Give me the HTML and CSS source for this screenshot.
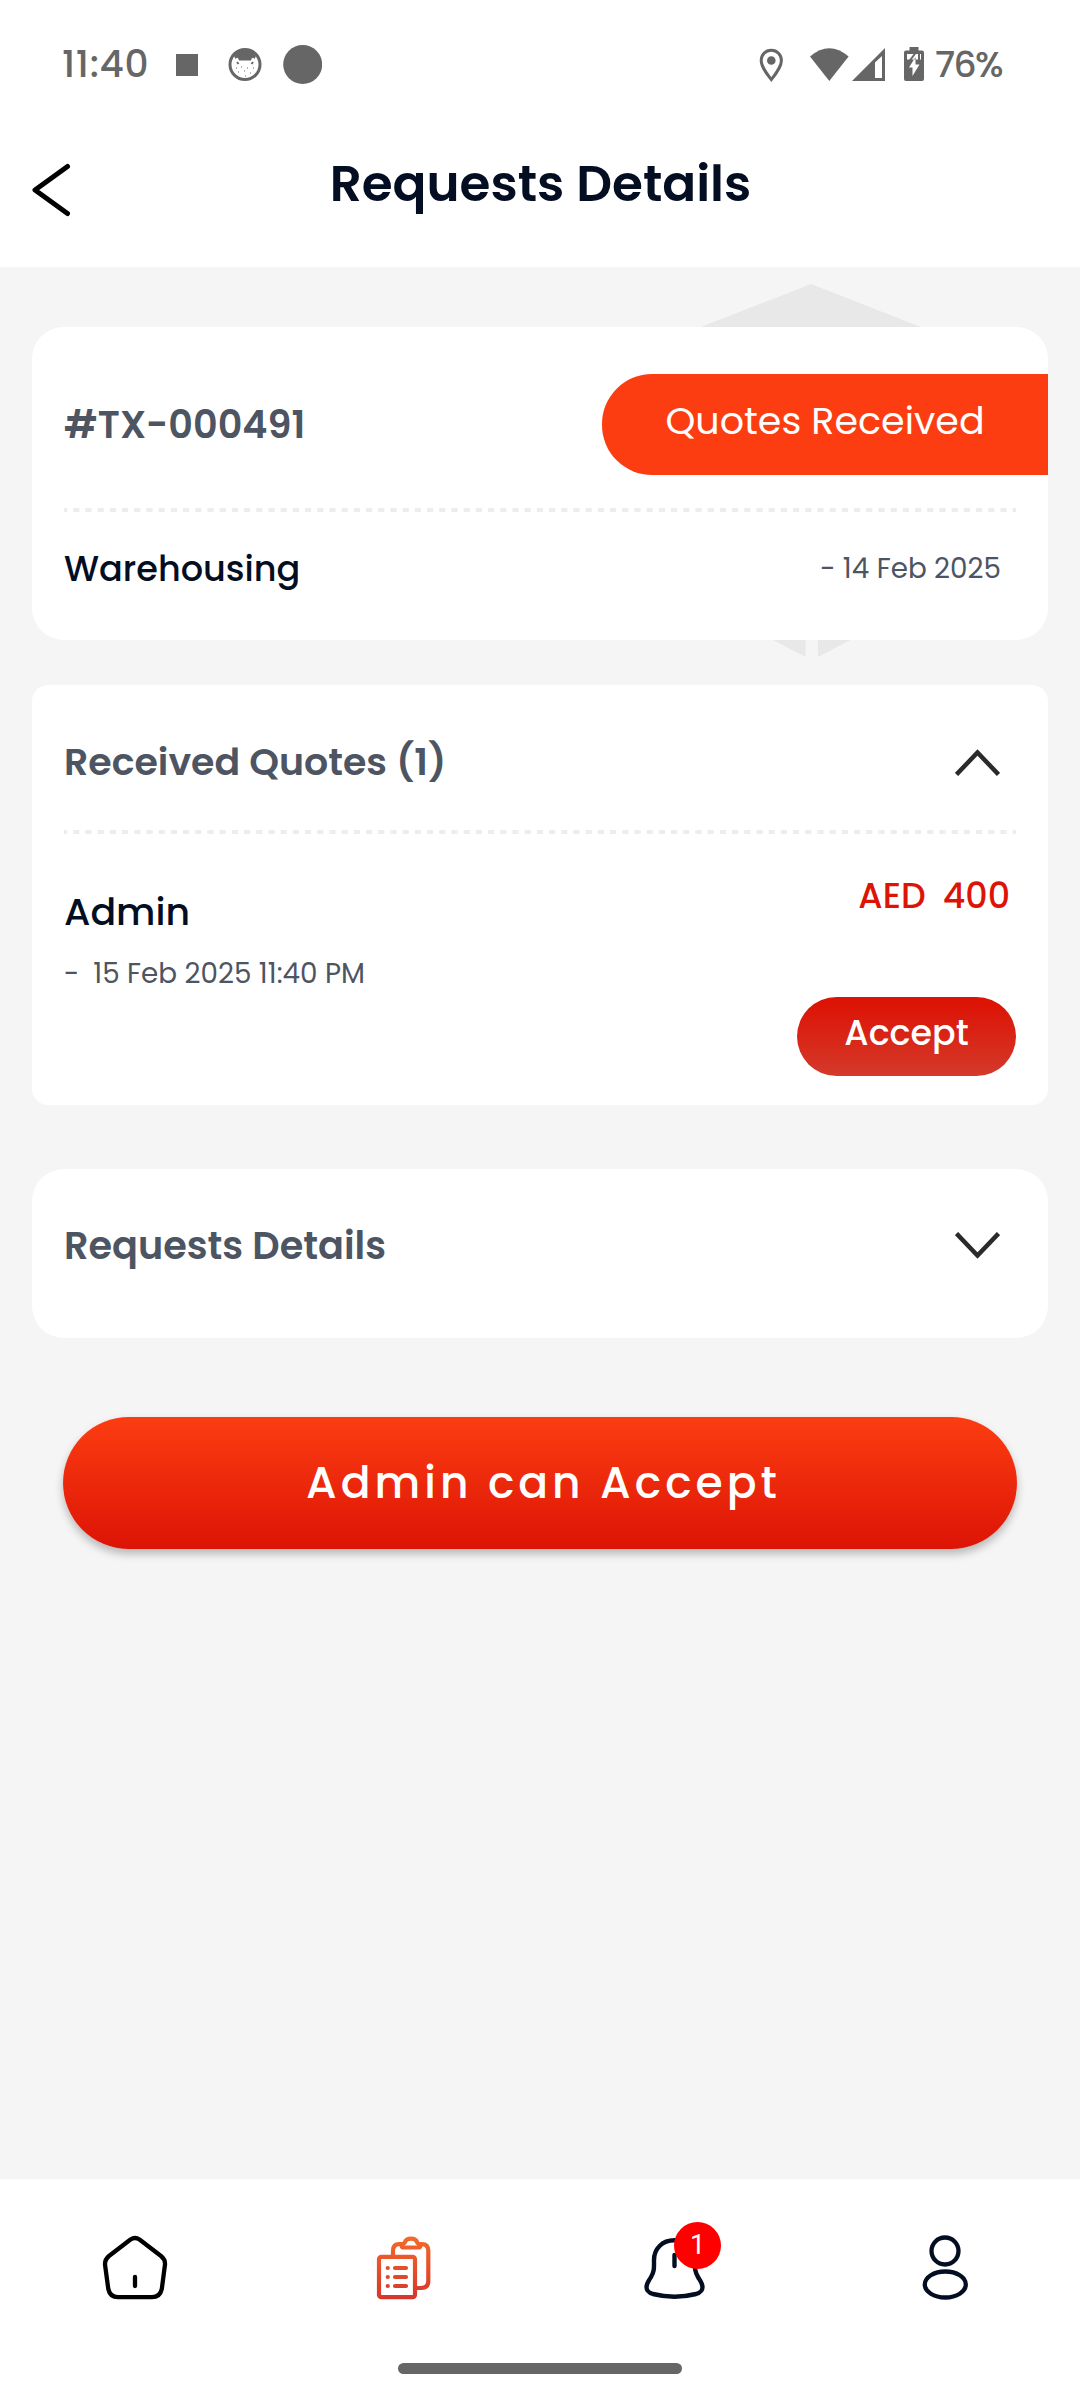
FILE: index.html
```html
<!DOCTYPE html>
<html lang="en">
<head>
<meta charset="utf-8">
<title>Requests Details</title>
<link rel="stylesheet" href="styles.css">
</head>
<body>
<div class="screen">
  <div class="status">
    <div class="status-left">
      <span class="clock">11:40</span>
      <svg width="146" height="40" viewBox="176 44 146 40" fill="#666">
        <rect x="176" y="54" width="22" height="22"/>
        <circle cx="245" cy="64.500" r="15" fill="#fff" stroke="#666" stroke-width="3"/>
        <path d="M234 56Q239 50 245 50T256 56L254.500 59Q252 56 251 60.500H239Q238 56 235.500 59Z"/>
        <path d="M237 62l1.500 2M253 62l-1.500 2" stroke="#666" stroke-width="2"/>
        <path d="M236 68h1M241 67h1M247 68h1M253 68h1M238 72h1M244 71h1M250 73h1M245 76h1" stroke="#666" stroke-width="1.200"/>
        <circle cx="302.700" cy="64.500" r="19.500"/>
      </svg>
    </div>
    <div class="status-right">
      <svg width="166" height="36" viewBox="759 45 166 36" fill="#666">
        <path d="M771.300 49.200C765.500 49.200 761.200 53.700 761.200 59.500C761.200 66.500 771.300 78.600 771.300 78.600S781.400 66.500 781.400 59.500C781.400 53.700 777.100 49.200 771.300 49.200Z" fill="none" stroke="#666" stroke-width="3"/>
        <circle cx="771.300" cy="59.500" r="4.300"/>
        <path d="M810 55.500Q829.300 39 848.600 55.500L829.300 80Z"/>
        <path d="M852 80L885 47V80ZM875 61.500V77H882V55Z" fill-rule="evenodd"/>
        <path d="M909.500 46H918.500V49.500H922Q924 49.500 924 51.500V78Q924 80 922 80H906Q904 80 904 78V51.500Q904 49.500 906 49.500H909.500Z"/>
        <path d="M907 53H921V58.500H907ZM915.500 56L909 66.500H912.500V75L919.500 63.500H915.500Z" fill="#fff"/>
        <path d="M909.500 60L915.500 52M919 52V60" stroke="#666" stroke-width="2"/>
      </svg>
      <span class="battery">76%</span>
    </div>
  </div>

  <header class="header">
    <svg class="back" width="40" height="54" viewBox="0 0 40 54" fill="none" stroke="#000" stroke-width="5" stroke-linecap="round" stroke-linejoin="round"><path d="M36.500 3.500L4 27L36.500 50.500"/></svg>
    <h1 class="title">Requests Details</h1>
  </header>

  <main class="content">
    <svg class="watermark" width="330" height="374" viewBox="646 284 330 374" fill="#e8e8e8">
      <path d="M811 284L976 348.500V574L818 657V560H805.600V657L646 574V348.500Z"/>
    </svg>

    <section class="card summary">
      <div class="summary-top">
        <span class="strong">#TX-000491</span>
        <span class="tag">Quotes Received</span>
      </div>
      <svg class="divider" width="952" height="5"><path d="M-3 3H952"/></svg>
      <div class="summary-bottom">
        <span class="service">Warehousing</span>
        <span class="small">- 14 Feb 2025</span>
      </div>
    </section>

    <section class="card quotes">
      <div class="quotes-head">
        <span class="strong received">Received Quotes (1)</span>
        <svg class="chevron" width="45" height="27" viewBox="0 0 45 27"><path d="M1.500 25.500L22.500 3.500L43.500 25.500"/></svg>
      </div>
      <svg class="divider" width="952" height="5"><path d="M-3 3H952"/></svg>
      <div class="quote">
        <div class="quote-info">
          <span class="name">Admin</span>
          <span class="small when"><span>-</span><span>15 Feb 2025 11:40 PM</span></span>
        </div>
        <div class="quote-side">
          <span class="price"><span>AED</span><span>400</span></span>
          <button class="accept">Accept</button>
        </div>
      </div>
    </section>

    <section class="card details">
      <span class="strong">Requests Details</span>
      <svg class="chevron" width="45" height="27" viewBox="0 0 45 27"><path d="M1.500 1.500L22.500 23.500L43.500 1.500"/></svg>
    </section>

    <button class="primary">Admin can Accept</button>
  </main>

  <nav class="nav">
    <div class="tabs">
      <a class="tab"><svg width="66" height="66" viewBox="102 2235 66 66" fill="none" stroke="#000" stroke-width="4.300" stroke-linecap="round" stroke-linejoin="round"><path d="M130.500 2239.500Q135 2236.500 139.500 2239.500L161 2256Q166 2260 164.800 2266L161.800 2289Q160 2297.200 152 2297.200H118Q110 2297.200 108.300 2289L105.200 2266Q104.200 2260 109 2256ZM135 2277V2286"/></svg></a>
      <a class="tab"><svg width="58" height="66" viewBox="376 2235 58 66" fill="none" stroke="url(#clip)" stroke-width="4.200" stroke-linecap="round" stroke-linejoin="round"><defs><linearGradient id="clip" gradientUnits="userSpaceOnUse" x1="0" y1="2236" x2="0" y2="2300"><stop offset="0" stop-color="#f46a2c"/><stop offset="1" stop-color="#d6352b"/></linearGradient></defs><rect x="379" y="2256.800" width="36" height="40.400" rx="2.500"/><path d="M393 2255V2251Q393 2244.200 399 2244.200H402M419 2244.200H422Q428.300 2244.200 428.300 2251V2281Q428.300 2288 421 2288H417M403 2247.500C401 2247.500 401.500 2244 404.500 2243C406 2238.800 408 2238.700 411 2238.700S416 2238.800 417.500 2243C420.500 2244 421 2247.500 419 2247.500ZM387.700 2268h.1M387.700 2277h.1M387.700 2286h.1M395 2268H406M395 2277H406M395 2286H406"/></svg></a>
      <a class="tab"><svg width="64" height="66" viewBox="643 2235 64 66" fill="none" stroke="#030e22" stroke-width="4.400" stroke-linecap="round"><path d="M674.500 2240.300C662 2240.300 654 2249 654 2260C654 2268 654.500 2271 651 2277C648 2282 646.500 2283.500 646.500 2287C646.500 2291 648.500 2292.500 653 2294C667 2297.500 682 2297.500 696 2294C700.500 2292.500 702.500 2291 702.500 2287C702.500 2283.500 701 2282 698 2277C694.500 2271 695 2268 695 2260C695 2249 687 2240.300 674.500 2240.300ZM674.500 2255V2266"/></svg><span class="badge">1</span></a>
      <a class="tab"><svg width="48" height="66" viewBox="921 2235 48 66" fill="none" stroke="#030e22" stroke-width="4.300"><circle cx="945" cy="2251" r="13.500"/><ellipse cx="945.300" cy="2284.500" rx="20.500" ry="13"/></svg></a>
    </div>
    <div class="home-bar"></div>
  </nav>
</div>
</body>
</html>
```
FILE: styles.css
```css
* { box-sizing: border-box; }

body {
  margin: 0;
  background: #f5f5f5;
  color: #030e22;
  font-family: Poppins, Inter, "Open Sans", sans-serif;
  white-space: nowrap;
}

button { border: 0; padding: 0; font-family: inherit; color: #fff; }
svg { display: block; flex: none; }

.screen { display: flex; flex-direction: column; height: 2400px; }

.status {
  display: flex;
  justify-content: space-between;
  align-items: center;
  height: 128px;
  padding: 0 77px 0 62px;
  background: #fff;
  color: #666;
  font-weight: 500;
}
.status-left, .status-right { display: flex; align-items: center; }
.clock { width: 114px; font-size: 37.500px; letter-spacing: 0.7px; }
.status-right { gap: 10px; }
.battery { width: 68px; font-size: 36px; letter-spacing: -1.6px; }

.header {
  display: grid;
  grid-template-columns: 40px 1fr 40px;
  align-items: center;
  height: 139px;
  padding: 0 31px 28px;
  background: #fff;
}
.back { margin-top: 13px; }
.title { margin: 0; padding-left: 1px; text-align: center; font-size: 50px; font-weight: 600; line-height: 60px; }

.content {
  position: relative;
  flex: 1;
  display: flex;
  flex-direction: column;
  padding: 60px 32px 0;
}
.watermark { position: absolute; left: 646px; top: 17px; }

.card { position: relative; background: #fff; border-radius: 32px; }
.strong { color: #4d5563; font-size: 38.200px; font-weight: 600; }
.received { font-size: 37.900px; padding-bottom: 1px; }
.small { color: #4d5563; font-size: 27.800px; }

.summary { height: 313px; padding-top: 47px; }
.summary-top { display: flex; justify-content: space-between; align-items: center; height: 101px; padding-left: 32px; }
.tag {
  display: flex;
  align-items: center;
  justify-content: center;
  width: 446px;
  height: 101px;
  padding-bottom: 9px;
  border-radius: 50px 0 0 50px;
  background: #fc3d11;
  color: #fff;
  font-size: 38px;
}
.divider { margin: 0 32px; fill: none; stroke: #ededed; stroke-width: 4; stroke-dasharray: 6.2 6; }
.summary .divider { margin-top: 32px; }
.summary-bottom { display: flex; justify-content: space-between; align-items: center; height: 114px; padding: 0 47px 0 32px; }
.service { padding-bottom: 2px; font-size: 35.100px; font-weight: 500; }

.quotes { height: 420px; margin-top: 45px; padding-top: 10px; border-radius: 16px; }
.quotes-head { display: flex; justify-content: space-between; align-items: center; height: 134px; padding: 0 48px 0 32px; }
.chevron { fill: none; stroke: #2a2a2a; stroke-width: 4.500; }
.quote { display: flex; justify-content: space-between; padding: 32px 32px 0; }
.quote-info { display: flex; flex-direction: column; padding-top: 16px; }
.name { font-size: 37.900px; font-weight: 500; line-height: 60px; }
.when { display: flex; gap: 14px; line-height: 63px; }
.quote-side { display: flex; flex-direction: column; align-items: flex-end; gap: 71px; }
.price { display: flex; gap: 17px; padding-right: 6px; color: #dc1406; font-size: 34.900px; font-weight: 500; line-height: 60px; }
.accept {
  width: 219px;
  height: 79px;
  padding-bottom: 8px;
  border-radius: 40px;
  background: linear-gradient(#dc1406 10%, #d43a2b);
  font-size: 34.900px;
  font-weight: 500;
}

.details { display: flex; justify-content: space-between; align-items: center; height: 169px; margin-top: 64px; padding: 0 48px 16px 32px; }

.primary {
  height: 132px;
  margin: 79px 31px 0;
  padding: 0 0 2px 7px;
  border-radius: 66px;
  background: linear-gradient(#fc3d11, #dc1406);
  box-shadow: 0 5px 8px rgba(0, 0, 0, 0.25);
  font-size: 44px;
  font-weight: 500;
  letter-spacing: 4px;
}

.nav { height: 221px; background: #fff; }
.tabs { display: grid; grid-template-columns: repeat(4, 1fr); height: 184px; padding-top: 56px; }
.tab { position: relative; display: flex; justify-content: center; align-items: flex-start; }
.badge {
  position: absolute;
  left: 134px;
  top: -13px;
  width: 47px;
  height: 47px;
  border-radius: 50%;
  background: #f00;
  color: #fff;
  font: 27px/47px Roboto, sans-serif;
  text-align: center;
}
.home-bar { width: 284px; height: 11px; margin: 0 auto; border-radius: 6px; background: #666; }
```
